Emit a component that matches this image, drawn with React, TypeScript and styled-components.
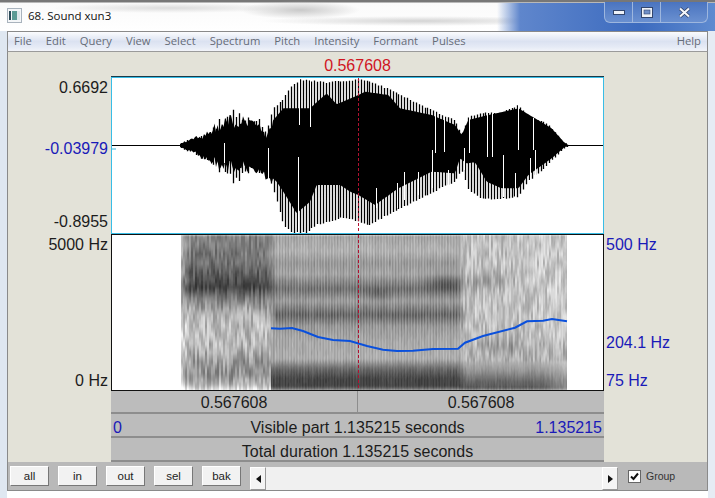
import styled, { createGlobalStyle } from "styled-components";

const GlobalStyle = createGlobalStyle`
  html, body { margin: 0; padding: 0; background: #fff; }
  body { font-family: "Liberation Sans", Arial, sans-serif; }
`;

type Pt = [number, number];

// piecewise linear lookup, points sorted by x
const lerp = (pts: Pt[], x: number) => {
  if (x <= pts[0][0]) return pts[0][1];
  for (let i = 1; i < pts.length; i++) {
    if (x <= pts[i][0]) {
      const [x0, y0] = pts[i - 1];
      const [x1, y1] = pts[i];
      return y0 + ((y1 - y0) * (x - x0)) / (x1 - x0);
    }
  }
  return pts[pts.length - 1][1];
};

const fromZoom = (pts: Pt[], ox: number, oy: number): Pt[] =>
  pts.map(([x, y]) => [ox + x / 3, oy + y / 3]);

const mulberry = (seed: number) => () => {
  seed = (seed + 0x6d2b79f5) | 0;
  let t = Math.imul(seed ^ (seed >>> 15), 1 | seed);
  t = (t + Math.imul(t ^ (t >>> 7), 61 | t)) ^ t;
  return ((t ^ (t >>> 14)) >>> 0) / 4294967296;
};

const TIP_TOP: Pt[] = [
  ...fromZoom([[210, 205], [250, 185], [280, 175], [315, 140], [355, 90], [380, 110], [438, 95], [465, 130], [490, 95], [520, 70], [540, 35], [570, 12], [600, 15], [650, 20], [745, 12]], 110, 75),
  ...fromZoom([[40, 15], [100, 40], [200, 90], [300, 135], [320, 178], [340, 125], [390, 108], [430, 115], [490, 88], [520, 125], [580, 145], [630, 205]], 355, 75),
];
const BODY_TOP: Pt[] = [
  ...fromZoom([[210, 207], [250, 192], [280, 182], [315, 160], [355, 140], [380, 145], [438, 135], [465, 175], [490, 135], [520, 100], [600, 100], [650, 55], [680, 88], [745, 60]], 110, 75),
  ...fromZoom([[30, 50], [100, 60], [135, 100], [230, 120], [300, 150], [320, 180], [340, 135], [400, 120], [490, 100], [590, 160], [630, 205]], 355, 75),
];
const TIP_BOTTOM: Pt[] = [
  ...fromZoom([[210, 218], [250, 240], [315, 285], [355, 330], [380, 325], [440, 318], [470, 320], [490, 350], [520, 450], [545, 475], [590, 475], [620, 450], [650, 445], [690, 430], [745, 440]], 110, 75),
  ...fromZoom([[40, 455], [100, 420], [200, 370], [300, 320], [320, 285], [340, 345], [380, 375], [410, 375], [490, 368], [520, 320], [580, 270], [630, 220]], 355, 75),
];
const BODY_BOTTOM: Pt[] = [
  ...fromZoom([[210, 216], [250, 232], [315, 262], [355, 280], [380, 275], [440, 280], [470, 295], [500, 320], [520, 350], [560, 415], [600, 380], [620, 330], [690, 330], [720, 350], [745, 360]], 110, 75),
  ...fromZoom([[60, 390], [130, 340], [230, 290], [300, 295], [315, 250], [335, 265], [360, 262], [395, 320], [440, 340], [490, 340], [520, 300], [590, 250], [630, 215]], 355, 75),
];

// the thin white gaps that cut into the black body: x, y from, y to
const GAPS: [number, number, number][] = [
  [299, 79, 125], [310, 80, 127], [298, 157, 233], [224, 143, 163], [268, 148, 178],
  [435, 108, 153], [444, 115, 152], [469, 117, 153], [487, 112, 157], [492, 113, 157],
  [518, 105, 150], [533, 118, 150], [376, 188, 208], [397, 183, 208], [404, 172, 200],
  [418, 172, 195], [432, 150, 188], [448, 170, 190], [464, 148, 170], [503, 155, 197],
  [515, 173, 197], [530, 158, 185], [535, 150, 175],
];

const buildWave = () => {
  const rand = mulberry(3);
  const top: string[] = [];
  const bottom: string[] = [];
  for (let x = 180; x <= 567; x += 1.5) {
    const jag = x < 272 ? (rand() - 0.5) * Math.min(14, (x - 180) * 0.3) : 0;
    top.push(`${x},${(lerp(BODY_TOP, x) + jag).toFixed(1)}`);
    bottom.unshift(`${x},${(lerp(BODY_BOTTOM, x) + jag).toFixed(1)}`);
  }
  let tips = "";
  for (let x = 181; x <= 567; x += 2.9) {
    const px = Math.round(x) + 0.5;
    const j = x < 272 ? rand() * Math.min(14, (x - 180) * 0.3) : rand() * 1.5;
    tips += `M${px} ${(lerp(TIP_TOP, x) + j).toFixed(1)}V${(lerp(TIP_BOTTOM, x) - j).toFixed(1)}`;
  }
  return { body: "M" + top.join("L") + "L" + bottom.join("L") + "Z", tips };
};
const WAVE = buildWave();

const VOICELESS: Pt[] = [[235, 0.58], [260, 0.64], [276, 0.78], [286, 0.88], [297, 0.62], [310, 0.38], [325, 0.3], [345, 0.34], [360, 0.46], [375, 0.5], [384, 0.34], [391, 0]];
const VOICED: Pt[] = [[235, 0.42], [250, 0.36], [262, 0.48], [273, 0.42], [288, 0.66], [300, 0.45], [314, 0.7], [325, 0.48], [340, 0.4], [358, 0.38], [368, 0.7], [378, 0.86], [386, 0.86], [391, 0.3]];
const TAIL: Pt[] = [[235, 0.3], [340, 0.3], [360, 0.36], [370, 0.5], [380, 0.7], [387, 0.76], [391, 0.3]];

const bump = (x: number, y: number, cx: number, cy: number, rx: number, ry: number, a: number) =>
  a * Math.exp(-(((x - cx) / rx) ** 2) - ((y - cy) / ry) ** 2);

const clamp01 = (v: number) => Math.max(0, Math.min(1, v));
const mix = (a: number, b: number, t: number) => a + (b - a) * t;

const buildSpectrogram = () => {
  const rand = mulberry(68);
  const levels: string[] = Array.from({ length: 24 }, () => "");
  let knots: number[] = [];
  for (let x = 181; x < 567; x++) {
    if (x % 2 === 1) knots = Array.from({ length: 20 }, () => rand());
    for (let y = 235; y < 391; y += 2) {
      const t = (y - 235) / 9;
      const k = Math.floor(t);
      const f = t - k;
      const n = knots[k] * (1 - f) + knots[k + 1] * f - 0.5;

      const w1 = y < 362 ? clamp01((x - 266) / 10) : x < 271 ? 0 : 1;
      const w2 = clamp01((x - 457) / 9);
      const pitchStripe = (y > 362 ? 0.05 : 0.14) * Math.sin((x * 2 * Math.PI) / 2.9);

      let voiceless = lerp(VOICELESS, y);
      if (x < 190) voiceless *= 0.6 + ((x - 181) / 9) * 0.4;
      voiceless += n * (y < 300 ? 0.26 : 0.36);

      const voiced =
        lerp(VOICED, y) * (1 + pitchStripe) +
        bump(x, y, 445, 282, 18, 8, 0.18) +
        bump(x, y, 378, 294, 12, 6, 0.12) +
        n * 0.07;

      let tail =
        lerp(TAIL, y) +
        bump(x, y, 482, 281, 24, 9, 0.14) +
        bump(x, y, 505, 345, 24, 8, 0.14) -
        bump(x, y, 560, 280, 40, 50, 0.06);
      if (x > 540 && y > 360) tail *= 1 - ((x - 540) / 27) * 0.3;
      tail = tail * (1 + pitchStripe * 0.6) + n * (y < 360 ? 0.3 : 0.08);

      const d = mix(mix(voiceless, voiced, w1), tail, w2);
      const level = Math.max(0, Math.min(23, Math.round(d * 23)));
      if (level > 0) levels[level] += `M${x} ${y}h1v2h-1z`;
    }
  }
  return levels;
};
const SPECTRO = buildSpectrogram();

const PITCH =
  "271,328.3 280,328.7 292,328 303,331 318,337 333,340 350,341 367,346 383,349.7 397,351 413,350.7 433,349 458,348.7 465,342.7 483,336 515,327.7 527,321.3 543,320.7 552,319 567,321.3";

const Page = styled.div`
  position: relative;
  width: 715px;
  height: 498px;
  overflow: hidden;
  box-sizing: border-box;
  padding-left: 7px;
  background:
    linear-gradient(90deg, transparent 0 497px, #5f86cc 520px, #3c6bbf 640px, #5f8bd0 100%) 0 3px / 100% 28px no-repeat,
    radial-gradient(ellipse 60px 9px at 300px 10px, #c9c9c9, transparent),
    radial-gradient(ellipse 160px 5px at 420px 21px, #d4d4d4, transparent),
    radial-gradient(ellipse 120px 5px at 170px 8px, #dcdcdc, transparent),
    linear-gradient(180deg, #777 0 2px, #fafafa 3px, #fff 31px, transparent 31px),
    linear-gradient(90deg, #dfe7f1 0 7px, #fff 7px 708px, #e6ecf4 708px);
`;

const Window = styled.div`
  width: 701px;
  display: flex;
  flex-direction: column;
`;

const TitleBar = styled.div`
  height: 31px;
  display: flex;
  align-items: flex-start;
  box-sizing: border-box;
  padding-top: 8px;
`;

const TitleText = styled.span`
  margin-left: 6px;
  font: 11.5px/15px "Open Sans", sans-serif;
  color: #111;
`;

const WindowControls = styled.div`
  margin: -6px 0 0 auto;
  display: flex;
  height: 20px;
  border: 1px solid #9db6de;
  border-top: none;
  border-radius: 0 0 6px 6px;
  background: linear-gradient(180deg, #4a74c0, #6a90d0);
`;

const ControlButton = styled.div<{ $width: number }>`
  width: ${(p) => p.$width}px;
  display: flex;
  align-items: center;
  justify-content: center;
  & + & { border-left: 1px solid #9db6de; }
`;

const MenuBar = styled.div`
  height: 21px;
  box-sizing: border-box;
  border: 1px solid #8a8a8a;
  border-bottom-color: #9a9a9a;
  display: flex;
  align-items: center;
  gap: 14px;
  padding: 0 6px 1px;
  background: linear-gradient(180deg, #fbfcfe 0%, #dbe2f1 50%, #e6ebf6 80%, #f2f4f9 100%);
`;

const MenuItem = styled.span<{ $end?: boolean }>`
  font: 11.25px/16px "Open Sans", sans-serif;
  color: #666c78;
  margin-left: ${(p) => (p.$end ? "auto" : "0")};
`;

const Editor = styled.div`
  display: grid;
  grid-template-columns: 103px 493px 103px;
  grid-template-rows: 25px 157px 157px 23px 24px 24px;
  background: #e3e2d8;
  border-left: 1px solid #8a8a8a;
  border-right: 1px solid #8a8a8a;
`;

const CursorTime = styled.div`
  grid-column: 2;
  font-size: 16px;
  line-height: 28px;
  color: #d0151f;
  text-align: center;
`;

const Axis = styled.div<{ $side: "left" | "right"; $row: number }>`
  grid-column: ${(p) => (p.$side === "left" ? 1 : 3)};
  grid-row: ${(p) => p.$row};
  display: flex;
  flex-direction: column;
  text-align: ${(p) => (p.$side === "left" ? "right" : "left")};
  padding: ${(p) => (p.$side === "left" ? "0 3px 0 0" : "0 0 0 2px")};
`;

const AxisLabel = styled.span<{ $top: number; $blue?: boolean }>`
  margin-top: ${(p) => p.$top}px;
  font-size: 16px;
  line-height: 18px;
  color: ${(p) => (p.$blue ? "#1a1ab8" : "#1c1c1c")};
`;

const Panel = styled.div<{ $selected?: boolean; $row: number }>`
  grid-column: 2;
  grid-row: ${(p) => p.$row};
  box-sizing: border-box;
  background: #fff;
  border: 1px solid ${(p) => (p.$selected ? "#38bde6" : "#111")};
  ${(p) => p.$selected && "box-shadow: 0 -1px 0 #1b3a48, 0 1px 0 #111;"}
  position: relative;
  z-index: ${(p) => (p.$selected ? 1 : 0)};
  svg { display: block; }
`;

const TimeRow = styled.div<{ $row: number; $pad: number }>`
  grid-column: 2;
  grid-row: ${(p) => p.$row};
  display: flex;
  align-items: center;
  background: #bcbcbc;
  border-bottom: 2px solid #8d8d8d;
  box-sizing: border-box;
  padding-top: ${(p) => p.$pad}px;
  font-size: 16px;
  color: #1c1c1c;
`;

const TimeCell = styled.div`
  flex: 1;
  height: 100%;
  text-align: center;
  line-height: 24px;
  & + & { border-left: 1px solid #8d8d8d; }
`;

const EdgeValue = styled.span`
  width: 70px;
  color: #1a1ab8;
  padding: 0 2px;
  &:last-child { text-align: right; }
`;

const RowLabel = styled.span`
  flex: 1;
  text-align: center;
  white-space: nowrap;
`;

const BottomBar = styled.div`
  height: 29px;
  box-sizing: border-box;
  display: flex;
  align-items: center;
  padding: 0 2px;
  background: #b9b9b9;
  border: 1px solid #8a8a8a;
  border-top: none;
`;

const ZoomGroup = styled.div`
  display: flex;
  gap: 9px;
`;

const ZoomButton = styled.button`
  width: 39px;
  height: 20px;
  padding: 0;
  font: 11.5px "Liberation Sans", sans-serif;
  color: #222;
  background: #f2f2f2;
  border: 1px solid;
  border-color: #fff #777 #777 #fff;
  border-radius: 0;
`;

const Scrollbar = styled.div`
  margin-left: 9px;
  align-self: flex-end;
  width: 368px;
  height: 23px;
  display: flex;
  background: #f0f0f0;
`;

const ScrollArrow = styled.div<{ $dir: "left" | "right" }>`
  width: 16px;
  display: flex;
  align-items: center;
  justify-content: center;
  background: #f4f4f4;
  border: 1px solid;
  border-color: #fff #999 #999 #fff;
  box-sizing: border-box;
  &::after {
    content: "";
    border-style: solid;
    border-width: 4px 0 4px 5px;
    border-color: transparent transparent transparent #111;
    transform: ${(p) => (p.$dir === "left" ? "rotate(180deg)" : "none")};
  }
`;

const ScrollTrack = styled.div`
  flex: 1;
`;

const GroupCheck = styled.label`
  margin-left: 10px;
  display: flex;
  align-items: center;
  gap: 5px;
  font: 10.5px "Liberation Sans", sans-serif;
  color: #333;
`;

const CheckBox = styled.span`
  width: 11px;
  height: 11px;
  display: flex;
  align-items: center;
  justify-content: center;
  background: #fff;
  border: 1px solid #666;
`;

const Cursor = ({ y1, y2 }: { y1: number; y2: number }) => (
  <line x1={358.5} x2={358.5} y1={y1} y2={y2} stroke="#b01030" strokeWidth={1} strokeDasharray="3 2" />
);

const Waveform = () => (
  <svg width={491} height={155} viewBox="112 78 491 155">
    <path d={WAVE.body} fill="#000" />
    <path d={WAVE.tips} stroke="#000" strokeWidth={1.3} fill="none" />
    <path d="M112 145.5H181M566 145.5H603" stroke="#000" strokeWidth={1} />
    <path d="M112 149H116" stroke="#35b5dc" strokeWidth={1} />
    {GAPS.map(([x, y1, y2]) => (
      <line key={x} x1={x + 0.5} x2={x + 0.5} y1={y1} y2={y2} stroke="#fff" strokeWidth={1} />
    ))}
    <Cursor y1={78} y2={233} />
  </svg>
);

const Spectrogram = () => (
  <svg width={491} height={155} viewBox="112 235 491 155">
    <defs>
      <filter id="soft" x="0" y="0" width="100%" height="100%">
        <feGaussianBlur stdDeviation="0.75 1.1" />
      </filter>
    </defs>
    <g filter="url(#soft)">
      {SPECTRO.map((d, i) => {
        const v = Math.round(255 - (i / 23) * 215);
        return d ? <path key={i} d={d} fill={`rgb(${v},${v},${v})`} /> : null;
      })}
    </g>
    <polyline points={PITCH} fill="none" stroke="#0a50dc" strokeWidth={2} />
    <Cursor y1={235} y2={390} />
  </svg>
);

const MENU = ["File", "Edit", "Query", "View", "Select", "Spectrum", "Pitch", "Intensity", "Formant", "Pulses"];
const ZOOMS = ["all", "in", "out", "sel", "bak"];

export default function App() {
  return (
    <Page>
      <GlobalStyle />
      <Window>
        <TitleBar>
          <svg width={15} height={15} viewBox="0 0 15 15">
            <rect x={0.5} y={0.5} width={14} height={14} fill="#f4f6f8" stroke="#a9b3bd" />
            <rect x={2} y={3} width={2} height={9} fill="#2c4a58" />
            <rect x={5} y={3} width={5} height={9} fill="#5c9a94" />
            <rect x={10} y={3} width={3} height={9} fill="#dfe6ea" />
          </svg>
          <TitleText>68. Sound xun3</TitleText>
          <WindowControls>
            <ControlButton $width={27}>
              <svg width={12} height={6} viewBox="0 0 12 6">
                <rect x={0.5} y={1.5} width={11} height={4} fill="#eef2f8" stroke="#32466e" />
              </svg>
            </ControlButton>
            <ControlButton $width={27}>
              <svg width={12} height={11} viewBox="0 0 12 11">
                <rect x={0.5} y={0.5} width={11} height={10} fill="#eef2f8" stroke="#32466e" />
                <rect x={3} y={3} width={6} height={4} fill="#6f8fc8" stroke="#32466e" strokeWidth={0.6} />
              </svg>
            </ControlButton>
            <ControlButton $width={46}>
              <svg width={13} height={11} viewBox="0 0 13 11">
                <path d="M2 1.5 L11 9.5 M11 1.5 L2 9.5" stroke="#2b3a5c" strokeWidth={3.6} />
                <path d="M2 1.5 L11 9.5 M11 1.5 L2 9.5" stroke="#f4f6fa" strokeWidth={2.2} />
              </svg>
            </ControlButton>
          </WindowControls>
        </TitleBar>
        <MenuBar>
          {MENU.map((m) => (
            <MenuItem key={m}>{m}</MenuItem>
          ))}
          <MenuItem $end>Help</MenuItem>
        </MenuBar>
        <Editor>
          <CursorTime>0.567608</CursorTime>
          <Axis $side="left" $row={2}>
            <AxisLabel $top={2}>0.6692</AxisLabel>
            <AxisLabel $top={43} $blue>-0.03979</AxisLabel>
            <AxisLabel $top={55}>-0.8955</AxisLabel>
          </Axis>
          <Panel $selected $row={2}>
            <Waveform />
          </Panel>
          <Axis $side="left" $row={3}>
            <AxisLabel $top={2}>5000 Hz</AxisLabel>
            <AxisLabel $top={118}>0 Hz</AxisLabel>
          </Axis>
          <Panel $row={3}>
            <Spectrogram />
          </Panel>
          <Axis $side="right" $row={3}>
            <AxisLabel $top={2} $blue>500 Hz</AxisLabel>
            <AxisLabel $top={80} $blue>204.1 Hz</AxisLabel>
            <AxisLabel $top={20} $blue>75 Hz</AxisLabel>
          </Axis>
          <TimeRow $row={4} $pad={0}>
            <TimeCell>0.567608</TimeCell>
            <TimeCell>0.567608</TimeCell>
          </TimeRow>
          <TimeRow $row={5} $pad={5}>
            <EdgeValue>0</EdgeValue>
            <RowLabel>Visible part 1.135215 seconds</RowLabel>
            <EdgeValue>1.135215</EdgeValue>
          </TimeRow>
          <TimeRow $row={6} $pad={5}>
            <RowLabel>Total duration 1.135215 seconds</RowLabel>
          </TimeRow>
        </Editor>
        <BottomBar>
          <ZoomGroup>
            {ZOOMS.map((z) => (
              <ZoomButton key={z}>{z}</ZoomButton>
            ))}
          </ZoomGroup>
          <Scrollbar>
            <ScrollArrow $dir="left" />
            <ScrollTrack />
            <ScrollArrow $dir="right" />
          </Scrollbar>
          <GroupCheck>
            <CheckBox>
              <svg width={9} height={9} viewBox="0 0 9 9">
                <path d="M1 4.5 L3.5 7 L8 1.5" stroke="#111" strokeWidth={2} fill="none" />
              </svg>
            </CheckBox>
            Group
          </GroupCheck>
        </BottomBar>
      </Window>
    </Page>
  );
}
